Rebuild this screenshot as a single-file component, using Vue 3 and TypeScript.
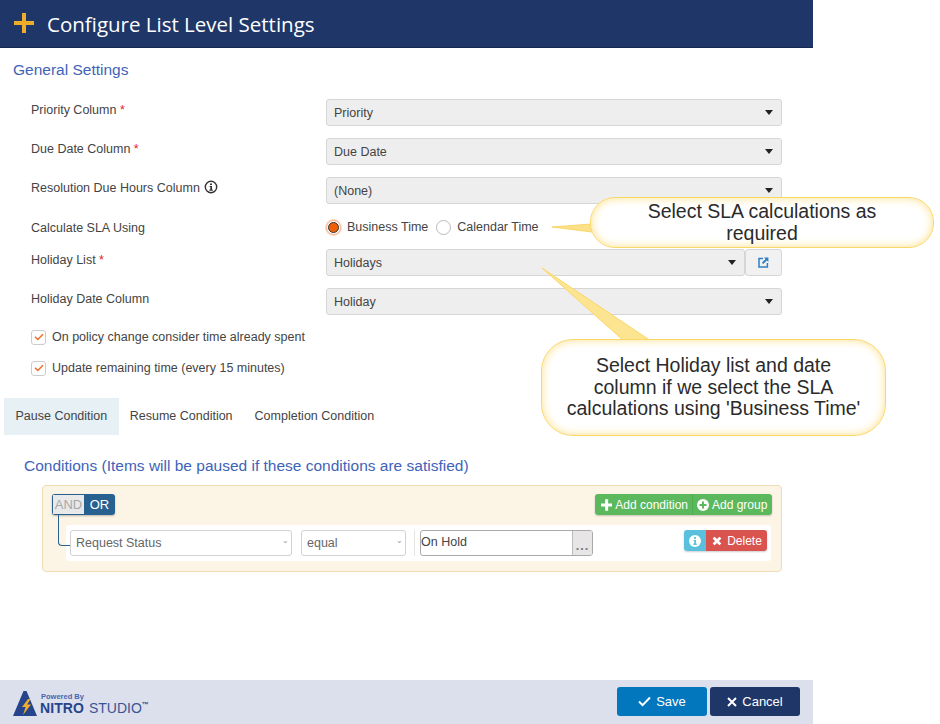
<script setup lang="ts">
interface Field { label: string; required?: boolean; info?: boolean; value: string; link?: boolean }
const topFields: Field[] = [
  { label: 'Priority Column', required: true, value: 'Priority' },
  { label: 'Due Date Column', required: true, value: 'Due Date' },
  { label: 'Resolution Due Hours Column', info: true, value: '(None)' },
]
const lowerFields: Field[] = [
  { label: 'Holiday List', required: true, value: 'Holidays', link: true },
  { label: 'Holiday Date Column', value: 'Holiday' },
]
const checks = ['On policy change consider time already spent', 'Update remaining time (every 15 minutes)']
const tabs = ['Pause Condition', 'Resume Condition', 'Completion Condition']
</script>

<template>
  <div class="page">
    <header class="topbar">
      <svg class="plus" width="20" height="20" viewBox="0 0 20 20"><path d="M8 0h4v8h8v4h-8v8H8v-8H0V8h8z" fill="#eeac2b" /></svg>
      <h1>Configure List Level Settings</h1>
    </header>

    <h2 class="section">General Settings</h2>

    <div class="form">
      <div v-for="f in topFields" :key="f.label" class="row">
        <label class="label">{{ f.label }}<span v-if="f.required" class="req"> *</span>
          <svg v-if="f.info" class="info" width="14" height="14" viewBox="0 0 14 14"><circle cx="7" cy="7" r="5.7" fill="none" stroke="#333" stroke-width="1.4" /><path d="M6 3.4h2v1.7H6zM5.6 6h2.4v3.6h.8v1.1H5.4V9.6h.9V7.1h-.7z" fill="#333" /></svg>
        </label>
        <div class="select"><span>{{ f.value }}</span><i class="caret" /></div>
      </div>

      <div class="row radio-row">
        <label class="label">Calculate SLA Using</label>
        <div class="radios">
          <span class="radio on"><b /></span><span class="radio-text">Business Time</span>
          <span class="radio"></span><span class="radio-text">Calendar Time</span>
        </div>
      </div>

      <div v-for="f in lowerFields" :key="f.label" class="row lower">
        <label class="label">{{ f.label }}<span v-if="f.required" class="req"> *</span></label>
        <div class="control">
          <div class="select"><span>{{ f.value }}</span><i class="caret" /></div>
          <div v-if="f.link" class="link-btn">
            <svg width="11" height="11" viewBox="0 0 11 11"><path d="M5 1.6H1v8.4h8.4V6" fill="none" stroke="#2f7fc4" stroke-width="1.5" /><path d="M6 .6h4.4V5L8.9 3.5 5.3 7.1 3.9 5.7l3.6-3.6z" fill="#2f7fc4" /></svg>
          </div>
        </div>
      </div>

      <div v-for="c in checks" :key="c" class="check-row">
        <span class="check"><svg width="10" height="8" viewBox="0 0 10 8"><path d="M1 3.8l2.8 2.8L9 1.2" fill="none" stroke="#ef6a22" stroke-width="1.4" /></svg></span>
        <span>{{ c }}</span>
      </div>
    </div>

    <nav class="tabs">
      <span v-for="(t, i) in tabs" :key="t" class="tab" :class="{ active: i === 0 }">{{ t }}</span>
    </nav>

    <h2 class="conditions-title">Conditions (Items will be paused if these conditions are satisfied)</h2>

    <section class="builder">
      <div class="builder-head">
        <div class="andor"><span class="and">AND</span><span class="or">OR</span></div>
        <div class="add-group">
          <span class="green">
            <svg width="12" height="12" viewBox="0 0 12 12"><path d="M4.4 0h3.2v4.4H12v3.2H7.6V12H4.4V7.6H0V4.4h4.4z" fill="#fff" /></svg>Add condition
          </span>
          <span class="green second">
            <svg width="12" height="12" viewBox="0 0 12 12"><circle cx="6" cy="6" r="6" fill="#fff" /><path d="M5 2.5h2V5h2.5v2H7v2.5H5V7H2.5V5H5z" fill="#5cb85c" /></svg>Add group
          </span>
        </div>
      </div>
      <div class="rule">
        <span class="connector" />
        <div class="fake-select wide">Request Status<i class="mini">⌄</i></div>
        <div class="fake-select narrow">equal<i class="mini">⌄</i></div>
        <span class="sep" />
        <div class="value-box"><span class="value">On Hold</span><span class="dots">...</span></div>
        <div class="rule-actions">
          <span class="btn-info"><svg width="12" height="12" viewBox="0 0 12 12"><circle cx="6" cy="6" r="6" fill="#fff" /><path d="M5 2h2v1.8H5zM4.6 5H7v3.6h.8V10H4.4V8.6h.9V6.3h-.7z" fill="#5bc0de" /></svg></span>
          <span class="btn-del"><svg width="12" height="12" viewBox="0 0 11 11"><path d="M1.5 3.3l1.8-1.8 2.2 2.2 2.2-2.2 1.8 1.8-2.2 2.2 2.2 2.2-1.8 1.8-2.2-2.2-2.2 2.2-1.8-1.8 2.2-2.2z" fill="#fff" /></svg>Delete</span>
        </div>
      </div>
    </section>

    <footer class="footer">
      <div class="logo">
        <svg width="24" height="25" viewBox="0 0 24 25"><path d="M10.5 0h3L24 25H0z" fill="#26448c" /><path d="M15 8l-6 8h3.6L10 24l8-10.500h-3.800L17.500 8z" fill="#eeac2b" /></svg>
        <div class="logo-text">
          <span class="powered">Powered By</span>
          <span class="brand"><b>NITRO</b> <span class="studio">STUDIO</span><sup>™</sup></span>
        </div>
      </div>
      <div class="actions">
        <button class="save"><svg width="13" height="11" viewBox="0 0 13 11"><path d="M1 5.500l3.600 3.600L12 1.500" fill="none" stroke="#fff" stroke-width="2" /></svg>Save</button>
        <button class="cancel"><svg width="10" height="10" viewBox="0 0 10 10"><path d="M1 1l8 8M9 1l-8 8" fill="none" stroke="#fff" stroke-width="2" /></svg>Cancel</button>
      </div>
    </footer>

    <svg class="tails" width="940" height="724" viewBox="0 0 940 724">
      <path d="M552 227L592 224V232Z" fill="#fde08a" stroke="#fbd768" stroke-width="1" />
      <path d="M542 268L624 341H651Z" fill="#fde491" stroke="#fbd768" stroke-width="1" />
    </svg>
    <div class="callout one">Select SLA calculations as required</div>
    <div class="callout two">Select Holiday list and date column if we select the SLA calculations using 'Business Time'</div>
  </div>
</template>

<style>
html, body { margin: 0; background: #fff; }
</style>

<style scoped>
.page {
  position: relative;
  width: 813px;
  height: 724px;
  display: flex;
  flex-direction: column;
  font-family: "Liberation Sans", Arial, sans-serif;
  font-size: 12.5px;
  color: #444;
}
.topbar {
  height: 47px;
  flex: none;
  background: #1f3669;
  border-bottom: 1px solid #16294f;
  display: flex;
  align-items: center;
  padding-left: 14px;
}
.plus { margin-right: 13px; margin-top: -2px; }
h1 {
  margin: 0;
  font-family: "Open Sans", sans-serif;
  font-weight: 400;
  font-size: 20.5px;
  color: #fff;
}
.section {
  margin: 13px 0 0 13px;
  font-weight: 400;
  font-size: 15.5px;
  line-height: 17px;
  color: #3e63b8;
}
.form { margin-top: 21px; padding-left: 31px; width: 751px; }
.row { display: flex; align-items: flex-start; height: 27px; margin-bottom: 12px; }
.label { width: 295px; flex: none; line-height: 20px; display: block; padding-top: 1px; }
.req { color: #e8202a; }
.info { vertical-align: -2px; margin-left: 4px; }
.control { display: flex; flex: 1; }
.select {
  flex: 1;
  height: 27px;
  box-sizing: border-box;
  background: #eee;
  border: 1px solid #d6d6d6;
  border-radius: 3px;
  padding: 0 8px 0 7px;
  display: flex;
  align-items: center;
  justify-content: space-between;
  color: #444;
}
.caret {
  width: 0;
  height: 0;
  border-left: 4px solid transparent;
  border-right: 4px solid transparent;
  border-top: 5px solid #222;
}
.link-btn {
  width: 37px;
  background: #f1f1f1;
  border: 1px solid #d6d6d6;
  border-radius: 3px;
  box-sizing: border-box;
  display: flex;
  align-items: center;
  justify-content: center;
}
.radio-row { height: 20px; margin-bottom: 12px; margin-top: 13px; }
.radios { display: flex; align-items: center; height: 20px; }
.radio {
  width: 15px;
  height: 15px;
  box-sizing: border-box;
  border: 1px solid #bbb;
  border-radius: 50%;
  background: #fff;
  display: flex;
  align-items: center;
  justify-content: center;
  margin-right: 6px;
}
.radio.on { border-color: #f4b08a; box-shadow: 0 0 0 1px #fbdccb; }
.radio.on b { width: 11px; height: 11px; border-radius: 50%; background: #ef5f08; border: 1.5px solid #333; box-sizing: border-box; }
.radio-text { margin-right: 8px; }
.check-row { display: flex; align-items: center; height: 20px; margin-bottom: 11px; line-height: 20px; }
.check {
  width: 13px;
  height: 13px;
  border: 1px solid #ccc;
  border-radius: 3px;
  display: flex;
  align-items: center;
  justify-content: center;
  margin-right: 6px;
  background: #fff;
}
.tabs { display: flex; margin: 9px 0 0 4px; height: 37px; }
.tab { padding: 0 11px; line-height: 37px; }
.tab.active { background: #e6f0f5; padding: 0 11.5px; }
.conditions-title {
  margin: 22px 0 0 24px;
  font-weight: 400;
  font-size: 15.5px;
  line-height: 17px;
  color: #3e63b8;
}
.builder {
  width: 740px;
  height: 87px;
  box-sizing: border-box;
  margin: 11px 0 0 42px;
  background: #fcf5e6;
  border: 1px solid #eedcb8;
  border-radius: 4px;
  padding: 8px 9px 0;
}
.builder-head { display: flex; justify-content: space-between; height: 22px; }
.andor { display: flex; height: 21px; border-radius: 3px; overflow: hidden; box-shadow: 0 1px 2px rgba(0,0,0,.25); line-height: 21px; width: 63px; font-size: 13px; }
.and { width: 32px; background: #e9e9e9; color: #a8a8a8; text-align: center; border: 1px solid #286090; border-right: 0; box-sizing: border-box; line-height: 19px; }
.or { flex: 1; background: #286090; color: #fff; text-align: center; }
.add-group { display: flex; height: 21px; box-shadow: 0 1px 2px rgba(0,0,0,.2); border-radius: 3px; overflow: hidden; font-size: 12px; }
.green {
  background: #5cb85c;
  color: #fff;
  display: flex;
  align-items: center;
  gap: 3px;
  padding: 0 4px 0 6px;
  width: 97px;
  box-sizing: border-box;
  white-space: nowrap;
}
.green.second { width: 80px; border-left: 1px solid #4cae4c; padding: 0 4px; }
.rule {
  position: relative;
  margin: 9px 1px 0 14px;
  height: 36px;
  background: #fff;
  border-radius: 3px;
  display: flex;
  align-items: flex-start;
  padding: 5px 4px 0 4px;
  box-sizing: border-box;
}
.connector {
  position: absolute;
  left: -8px;
  top: -10px;
  width: 11px;
  height: 30px;
  border-left: 1.5px solid #286090;
  border-bottom: 1.5px solid #286090;
  border-bottom-left-radius: 4px;
}
.fake-select {
  height: 26px;
  box-sizing: border-box;
  border: 1.5px solid #d2d2d2;
  border-radius: 3px;
  padding: 0 5px;
  line-height: 24px;
  color: #666;
  background: #fff;
  position: relative;
}
.wide { width: 222px; margin-right: 9px; }
.narrow { width: 105px; margin-right: 8px; }
.mini { position: absolute; right: 2px; top: -2px; font-style: normal; font-size: 8px; color: #999; }
.sep { width: 1px; height: 26px; background: #e6e6e6; margin-right: 5px; }
.value-box {
  width: 173px;
  height: 26px;
  box-sizing: border-box;
  border: 1.5px solid #aaa;
  border-radius: 3px;
  display: flex;
  overflow: hidden;
  line-height: 23px;
  color: #444;
}
.value { flex: 1; padding-left: 0; }
.dots { width: 20px; background: #e7e5e5; border-left: 1px solid #bbb; text-align: center; color: #777; font-weight: 700; letter-spacing: 1px; line-height: 30px; box-sizing: border-box; }
.rule-actions { display: flex; height: 21px; margin-left: auto; border-radius: 3px; overflow: hidden; box-shadow: 0 1px 2px rgba(0,0,0,.2); font-size: 12px; }
.btn-info { width: 22px; background: #5bc0de; display: flex; align-items: center; justify-content: center; }
.btn-del { width: 61px; background: #d9534f; color: #fff; display: flex; align-items: center; justify-content: center; gap: 4px; }
.footer {
  margin-top: auto;
  height: 44px;
  background: #dbe0ec;
  display: flex;
  align-items: center;
  justify-content: space-between;
  padding: 0 13px;
  box-sizing: border-box;
}
.logo { display: flex; align-items: flex-end; margin-top: 3px; }
.logo-text { display: flex; flex-direction: column; margin-left: 3px; }
.powered { font-size: 7.5px; font-weight: 700; color: #4866b0; line-height: 9px; margin-left: 1px; }
.brand { font-size: 14px; line-height: 15px; color: #26448c; white-space: nowrap; }
.brand b { font-weight: 700; letter-spacing: .1px; }
.studio { color: #3a5596; margin-left: 1px; }
.brand sup { font-size: 7px; font-weight: 700; vertical-align: 6px; line-height: 0; }
.actions { display: flex; gap: 3px; margin-top: -1px; }
button {
  width: 90px;
  height: 29px;
  border: 0;
  border-radius: 3px;
  color: #fff;
  font-family: inherit;
  font-size: 13px;
  display: flex;
  align-items: center;
  justify-content: center;
  gap: 5px;
  padding: 0;
}
.save { background: #0277bd; }
.cancel { background: #1f3669; }
.tails { position: absolute; left: 0; top: 0; pointer-events: none; }
.callout {
  position: absolute;
  box-sizing: border-box;
  display: flex;
  align-items: center;
  justify-content: center;
  text-align: center;
  background: #fff;
  border: 1.5px solid #fbd768;
  box-shadow: inset 0 0 10px #fddf88;
  color: #2b2b2b;
  font-size: 19.5px;
  line-height: 21.5px;
}
.one { left: 590px; top: 197px; width: 344px; height: 51px; border-radius: 25px; padding: 0 50px; }
.two { left: 541px; top: 339px; width: 345px; height: 97px; border-radius: 32px; padding: 0 23px; }
</style>
